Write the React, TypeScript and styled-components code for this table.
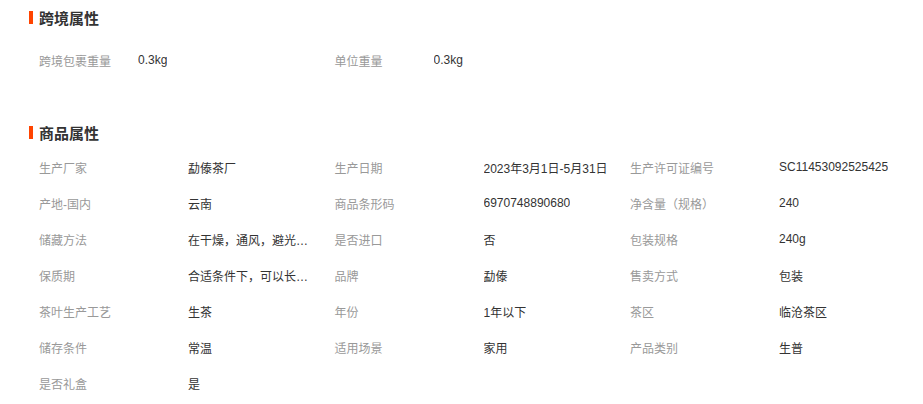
import React from 'react';
import styled, { createGlobalStyle } from 'styled-components';

interface IAttr {
    label: string;
    value: string;
}

const crossBorder: IAttr[] = [
    { label: '跨境包裹重量', value: '0.3kg' },
    { label: '单位重量', value: '0.3kg' },
];

const goods: IAttr[] = [
    { label: '生产厂家', value: '勐傣茶厂' },
    { label: '生产日期', value: '2023年3月1日-5月31日' },
    { label: '生产许可证编号', value: 'SC11453092525425' },
    { label: '产地-国内', value: '云南' },
    { label: '商品条形码', value: '6970748890680' },
    { label: '净含量（规格）', value: '240' },
    { label: '储藏方法', value: '在干燥，通风，避光，无异味处存放' },
    { label: '是否进口', value: '否' },
    { label: '包装规格', value: '240g' },
    { label: '保质期', value: '合适条件下，可以长期保存' },
    { label: '品牌', value: '勐傣' },
    { label: '售卖方式', value: '包装' },
    { label: '茶叶生产工艺', value: '生茶' },
    { label: '年份', value: '1年以下' },
    { label: '茶区', value: '临沧茶区' },
    { label: '储存条件', value: '常温' },
    { label: '适用场景', value: '家用' },
    { label: '产品类别', value: '生普' },
    { label: '是否礼盒', value: '是' },
];

const App: React.FC = () => {
    return (
        <Page>
            <GlobalStyle />
            <Section>
                <Title>跨境属性</Title>
                <Grid $top={8}>
                    {crossBorder.map((a) => (
                        <Item key={a.label}>
                            <Label $width={99}>{a.label}</Label>
                            <Value>{a.value}</Value>
                        </Item>
                    ))}
                </Grid>
            </Section>
            <Section $top={37}>
                <Title>商品属性</Title>
                <Grid>
                    {goods.map((a) => (
                        <Item key={a.label}>
                            <Label $width={149}>{a.label}</Label>
                            <Value title={a.value}>{a.value}</Value>
                        </Item>
                    ))}
                </Grid>
            </Section>
        </Page>
    );
};

export default App;

const GlobalStyle = createGlobalStyle`
    body {
        margin: 0;
        background: #fff;
        font-family: "Liberation Sans", "Noto Sans CJK SC", sans-serif;
    }
`;

const Page = styled.div`
    width: 923px;
    padding-left: 29px;
    box-sizing: border-box;
    overflow: hidden;
`;

const Section = styled.div<{ $top?: number }>`
    margin-top: ${(p) => p.$top || 0}px;
`;

const Title = styled.div`
    display: flex;
    align-items: center;
    height: 34px;
    font-size: 15px;
    font-weight: bold;
    color: #333;
    &::before {
        content: '';
        width: 4px;
        height: 13px;
        margin-right: 6px;
        background: #ff4400;
    }
`;

const Grid = styled.div<{ $top?: number }>`
    display: grid;
    grid-template-columns: repeat(3, 295.5px);
    margin-top: ${(p) => p.$top || 0}px;
    padding-left: 10px;
`;

const Item = styled.div`
    display: flex;
    align-items: center;
    height: 36px;
    font-size: 12px;
`;

const Label = styled.div<{ $width: number }>`
    width: ${(p) => p.$width}px;
    flex-shrink: 0;
    color: #999;
    white-space: nowrap;
`;

const Value = styled.div`
    max-width: 132px;
    color: #333;
    white-space: nowrap;
    overflow: hidden;
    text-overflow: ellipsis;
`;
